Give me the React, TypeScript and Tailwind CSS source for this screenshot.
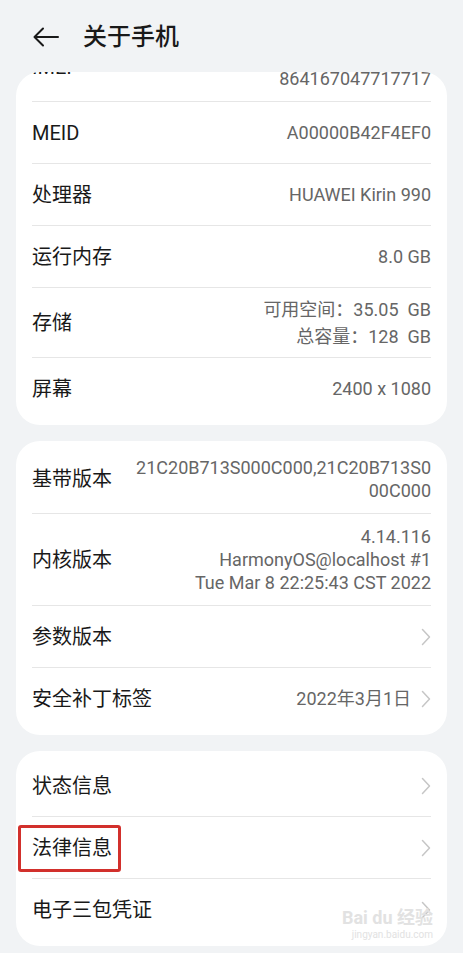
type Row = {
  label: string
  value?: string[]
  leading?: string
  py?: string
  arrow?: boolean
  mark?: boolean
}

const font = { fontFamily: 'Roboto, "Noto Sans CJK SC", sans-serif' }

const cardOne: Row[] = [
  { label: 'IMEI', value: ['864167047717709', '864167047717717'], py: 'py-[11px]' },
  { label: 'MEID', value: ['A00000B42F4EF0'] },
  { label: '处理器', value: ['HUAWEI Kirin 990'] },
  { label: '运行内存', value: ['8.0 GB'] },
  { label: '存储', value: ['可用空间：35.05  GB', '总容量：128  GB'], leading: 'leading-[27px]', py: 'pt-2 pb-[7px]' },
  { label: '屏幕', value: ['2400 x 1080'] },
]

const cardTwo: Row[] = [
  { label: '基带版本', value: ['21C20B713S000C000,21C20B713S0', '00C000'], py: 'py-[11px]' },
  { label: '内核版本', value: ['4.14.116', 'HarmonyOS@localhost #1', 'Tue Mar 8 22:25:43 CST 2022'], py: 'py-[11px]' },
  { label: '参数版本', arrow: true },
  { label: '安全补丁标签', value: ['2022年3月1日'], arrow: true },
]

const cardThree: Row[] = [
  { label: '状态信息', arrow: true },
  { label: '法律信息', arrow: true, mark: true },
  { label: '电子三包凭证', arrow: true },
]

function Chevron() {
  return (
    <svg width="10" height="18" viewBox="0 0 10 18" fill="none" stroke="#c6c6c6" strokeWidth="1.5" strokeLinecap="round" strokeLinejoin="round">
      <path d="M1.5 1.5L8.5 9l-7 7.5" />
    </svg>
  )
}

function InfoRow({ row, last }: { row: Row; last: boolean }) {
  return (
    <div className="relative">
      <div className={`flex min-h-[61px] items-center justify-between gap-3 px-4 ${row.py ?? ''}`}>
        <span className="shrink-0 text-[20px] text-[#191919]">{row.label}</span>
        <div className="flex items-center gap-[10px]">
          {row.value && (
            <div className={`text-right text-[18px] text-[#666] ${row.leading ?? 'leading-[23px]'}`}>
              {row.value.map((v) => (
                <div key={v} className="whitespace-pre">{v}</div>
              ))}
            </div>
          )}
          {row.arrow && <Chevron />}
        </div>
      </div>
      {!last && <div className="mx-4 h-px bg-[#e6e6e6]" />}
      {row.mark && (
        <div className="absolute left-[2px] top-[8px] h-[47px] w-[103px] rounded-[3px] border-[3px] border-[#d2302c]" />
      )}
    </div>
  )
}

function Card({ rows, shift }: { rows: Row[]; shift?: boolean }) {
  return (
    <section className="overflow-hidden rounded-3xl bg-white pt-1 pb-[6px]">
      <div className={shift ? '-mt-[43px]' : ''}>
        {rows.map((row, i) => (
          <InfoRow key={row.label} row={row} last={i === rows.length - 1} />
        ))}
      </div>
    </section>
  )
}

export default function App() {
  return (
    <div className="relative h-[953px] w-full overflow-hidden bg-[#f1f3f5]" style={font}>
      <header className="flex h-[72px] items-center gap-[24px] px-[33px] pt-[2px]">
        <svg width="26" height="20" viewBox="0 0 26 20" fill="none" stroke="#191919" strokeWidth="2" strokeLinecap="round" strokeLinejoin="round">
          <path d="M25 10H2" />
          <path d="M10 1.5L1.5 10l8.5 8.5" />
        </svg>
        <h1 className="text-[24px] font-medium text-[#191919]">关于手机</h1>
      </header>

      <main className="flex flex-col gap-4 px-4">
        <Card rows={cardOne} shift />
        <Card rows={cardTwo} />
        <Card rows={cardThree} />
      </main>

      {/* watermark */}
      <div className="pointer-events-none absolute bottom-[12px] right-[30px] flex flex-col items-end text-[#e2e2e2]">
        <span className="text-[18px] font-bold leading-[22px]">Bai du 经验</span>
        <span className="text-[10px] leading-[12px]">jingyan.baidu.com</span>
      </div>
    </div>
  )
}
